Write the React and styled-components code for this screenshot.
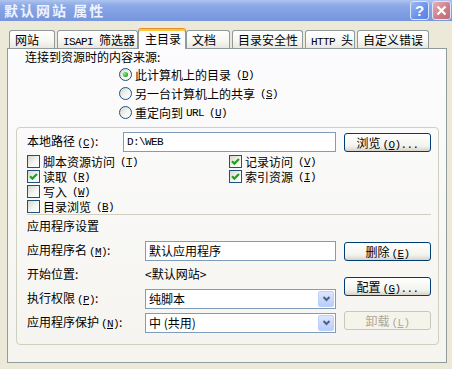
import React from 'react'
import styled, { createGlobalStyle } from 'styled-components'

const GlobalStyle = createGlobalStyle`
    html, body {
        margin: 0;
        padding: 0;
        background: #ECE9D8;
    }
    body {
        font-family: "Noto Sans CJK SC", "Noto Sans", sans-serif;
        font-size: 12px;
        color: #000;
    }
`

const Window = styled.div`
    width: 452px;
    height: 369px;
    background: #ECE9D8;
    display: flex;
    flex-direction: column;
    overflow: hidden;
`

const TitleBar = styled.div`
    height: 21px;
    flex: none;
    display: flex;
    align-items: center;
    justify-content: space-between;
    padding: 0 1px 0 4px;
    background: linear-gradient(to bottom, #AFC5F0 0%, #8DA9E7 25%, #7E9DE2 65%, #7896DD 100%);
`

const Title = styled.span`
    color: #EEF3FD;
    font-weight: bold;
    font-size: 14px;
    letter-spacing: 2px;
    line-height: 21px;
`

const CaptionButtons = styled.div`
    display: flex;
    gap: 3px;
    align-self: flex-start;
    padding-top: 1px;
`

const CapButton = styled.span`
    width: 19px;
    height: 19px;
    box-sizing: border-box;
    border: 1px solid #DCE6FA;
    border-radius: 3px;
    background: ${p => p.$close
        ? 'linear-gradient(135deg, #E9ADB3, #CB7C86 60%, #C06C77)'
        : 'linear-gradient(135deg, #9DBAF3, #6790EA 60%, #5A84E4)'};
    color: #fff;
    font: bold 15px "Liberation Sans", sans-serif;
    display: flex;
    align-items: center;
    justify-content: center;
`

const Body = styled.div`
    padding: 7px 5px 0 7px;
    display: flex;
    flex-direction: column;
`

const TabRow = styled.div`
    height: 20px;
    display: flex;
    align-items: flex-end;
    gap: 2px;
    padding-left: 2px;
`

const Tab = styled.div`
    width: ${p => p.$w}px;
    height: ${p => (p.$active ? 21 : 18)}px;
    margin: 0 ${p => (p.$active ? -2 : 0)}px ${p => (p.$active ? -1 : 0)}px;
    box-sizing: border-box;
    position: relative;
    z-index: ${p => (p.$active ? 1 : 0)};
    border: 1px solid #919B9C;
    border-bottom: none;
    border-top-color: ${p => (p.$active ? '#E68B2C' : '#919B9C')};
    border-radius: 3px 3px 0 0;
    box-shadow: ${p => (p.$active ? 'inset 0 2px 0 #FFC83C' : 'none')};
    background: ${p => (p.$active
        ? '#FCFCFE'
        : 'linear-gradient(to bottom, #FFFFFF, #F6F6F2 60%, #E8E7E0)')};
    padding: ${p => (p.$active ? '3px 0 0 6px' : '2px 0 0 5px')};
    line-height: 14px;
    white-space: nowrap;
`

const Panel = styled.div`
    height: 315px;
    box-sizing: border-box;
    border: 1px solid #919B9C;
    background: linear-gradient(to bottom, #FCFCFE, #F5F4EF);
    display: flex;
    flex-direction: column;
`

const Heading = styled.div`
    line-height: 16px;
    padding-left: 17px;
`

const RadioList = styled.div`
    display: flex;
    flex-direction: column;
    padding-left: 111px;
`

const Option = styled.div`
    height: 19px;
    display: flex;
    align-items: center;
    gap: 3px;
    line-height: 14px;
`

const Radio = styled.span`
    width: 13px;
    height: 13px;
    box-sizing: border-box;
    border-radius: 50%;
    border: 1px solid #1C5180;
    background: linear-gradient(135deg, #D6D5CE, #F4F4F0 55%, #FFFFFF);
    display: flex;
    align-items: center;
    justify-content: center;
    &::after {
        content: '';
        width: 5px;
        height: 5px;
        border-radius: 50%;
        background: ${p => (p.$on ? 'radial-gradient(circle at 35% 35%, #9BE69A, #2FAE2E 60%, #1C8F1C)' : 'transparent')};
    }
`

const GroupBox = styled.div`
    margin: 5px 7px 0 8px;
    height: 218px;
    box-sizing: border-box;
    border: 1px solid #D0D0BF;
    border-radius: 4px;
    padding: 0 7px 0 10px;
    display: flex;
    flex-direction: column;
`

const PathRow = styled.div`
    margin-top: 4px;
    height: 20px;
    display: flex;
    align-items: center;
`

const Label = styled.span`
    width: ${p => p.$w}px;
    flex: none;
    line-height: 14px;
    white-space: nowrap;
`

const Input = styled.div`
    width: ${p => p.$w}px;
    height: 20px;
    box-sizing: border-box;
    border: 1px solid #7F9DB9;
    background: #fff;
    padding-left: 3px;
    display: flex;
    align-items: center;
    line-height: 14px;
`

const Button = styled.button`
    width: 87px;
    height: 19px;
    flex: none;
    box-sizing: border-box;
    padding: 0;
    margin-left: ${p => p.$ml || 0}px;
    margin-top: ${p => p.$mt || 0}px;
    border: 1px solid ${p => (p.disabled ? '#C9C7BA' : '#003C74')};
    border-radius: 3px;
    background: ${p => (p.disabled
        ? '#F5F4EA'
        : 'linear-gradient(to bottom, #FFFFFF, #F3F3EE 70%, #D8D3C8)')};
    color: ${p => (p.disabled ? '#ACA899' : '#000')};
    font-family: inherit;
    font-size: 12px;
    line-height: 17px;
    white-space: nowrap;
`

const CheckGrid = styled.div`
    margin-top: 2px;
    display: grid;
    grid-template-columns: 202px 1fr;
    grid-template-rows: repeat(4, 15px);
    grid-auto-flow: column;
`

const CheckItem = styled.div`
    display: flex;
    align-items: center;
    gap: 3px;
    line-height: 14px;
    grid-column: ${p => p.$col};
    grid-row: ${p => p.$row};
`

const Box = styled.span`
    width: 13px;
    height: 13px;
    box-sizing: border-box;
    border: 1px solid #1C5180;
    background: linear-gradient(135deg, #D6D5CE, #F4F4F0 55%, #FFFFFF);
    display: flex;
    align-items: center;
    justify-content: center;
`

const Separator = styled.div`
    height: 1px;
    background: #D0D0BF;
`

const Lower = styled.div`
    margin-top: 4px;
    display: flex;
`

const Fields = styled.div`
    width: 309px;
    display: flex;
    flex-direction: column;
`

const Row = styled.div`
    height: ${p => p.$h}px;
    margin-top: ${p => p.$mt || 0}px;
    display: flex;
    align-items: center;
    line-height: 14px;
`

const Buttons = styled.div`
    margin-left: 8px;
    display: flex;
    flex-direction: column;
`

const Select = styled.div`
    width: 191px;
    height: 20px;
    box-sizing: border-box;
    border: 1px solid #7F9DB9;
    background: #fff;
    padding: 0 1px 0 3px;
    display: flex;
    align-items: center;
    justify-content: space-between;
`

const Arrow = styled.span`
    width: 16px;
    height: 16px;
    box-sizing: border-box;
    border: 1px solid #BCD0FA;
    border-radius: 2px;
    background: linear-gradient(to bottom, #DCE6FE, #B8CDFA);
    display: flex;
    align-items: center;
    justify-content: center;
`

const Mono = styled.span`
    font-family: "Liberation Mono", monospace;
    font-size: 11px;
    letter-spacing: -0.6px;
`

const Key = styled(Mono)`
    margin-left: 2px;
    u {
        text-underline-offset: 1px;
    }
`

const Mn = ({ k, more }) => (
    <Key>({<u>{k}</u>}){more ? '...' : ''}</Key>
)

const Check = () => (
    <svg width="9" height="9" viewBox="0 0 9 9">
        <polyline points="1,4.2 3.4,6.6 8,2" fill="none" stroke="#21A121" strokeWidth="2.2" />
    </svg>
)

const Chevron = () => (
    <svg width="9" height="6" viewBox="0 0 9 6">
        <polyline points="1.5,1 4.5,4 7.5,1" fill="none" stroke="#4D6185" strokeWidth="2" />
    </svg>
)

const tabs = [
    { w: 46, label: '网站' },
    { w: 81, label: <><Mono>ISAPI </Mono>筛选器</> },
    { w: 48, label: '主目录', active: true },
    { w: 44, label: '文档' },
    { w: 71, label: '目录安全性' },
    { w: 50, label: <><Mono>HTTP </Mono>头</> },
    { w: 72, label: '自定义错误' },
]

const App = () => (
    <Window>
        <GlobalStyle />
        <TitleBar>
            <Title>默认网站 属性</Title>
            <CaptionButtons>
                <CapButton>?</CapButton>
                <CapButton $close>
                    <svg width="11" height="11" viewBox="0 0 11 11">
                        <path d="M1.5 1.5 L9.5 9.5 M9.5 1.5 L1.5 9.5" stroke="#fff" strokeWidth="2.2" />
                    </svg>
                </CapButton>
            </CaptionButtons>
        </TitleBar>
        <Body>
            <TabRow>
                {tabs.map((t, i) => (
                    <Tab key={i} $w={t.w} $active={t.active}>{t.label}</Tab>
                ))}
            </TabRow>
            <Panel>
                <Heading>连接到资源时的内容来源:</Heading>
                <RadioList>
                    <Option><Radio $on />此计算机上的目录<Mn k="D" /></Option>
                    <Option><Radio />另一台计算机上的共享<Mn k="S" /></Option>
                    <Option><Radio />重定向到 <Mono>URL</Mono><Mn k="U" /></Option>
                </RadioList>
                <GroupBox>
                    <PathRow>
                        <Label $w={96}>本地路径<Mn k="C" />:</Label>
                        <Input $w={213}><Mono>D:\WEB</Mono></Input>
                        <Button $ml={8}>浏览<Mn k="O" more /></Button>
                    </PathRow>
                    <CheckGrid>
                        <CheckItem $col={1} $row={1}><Box />脚本资源访问<Mn k="T" /></CheckItem>
                        <CheckItem $col={1} $row={2}><Box><Check /></Box>读取<Mn k="R" /></CheckItem>
                        <CheckItem $col={1} $row={3}><Box />写入<Mn k="W" /></CheckItem>
                        <CheckItem $col={1} $row={4}><Box />目录浏览<Mn k="B" /></CheckItem>
                        <CheckItem $col={2} $row={1}><Box><Check /></Box>记录访问<Mn k="V" /></CheckItem>
                        <CheckItem $col={2} $row={2}><Box><Check /></Box>索引资源<Mn k="I" /></CheckItem>
                    </CheckGrid>
                    <Separator />
                    <Lower>
                        <Fields>
                            <Row $h={14}>应用程序设置</Row>
                            <Row $h={24} $mt={6}>
                                <Label $w={118}>应用程序名<Mn k="M" />:</Label>
                                <Input $w={191}>默认应用程序</Input>
                            </Row>
                            <Row $h={22}>
                                <Label $w={118}>开始位置:</Label>
                                <span>&lt;默认网站&gt;</span>
                            </Row>
                            <Row $h={24} $mt={2}>
                                <Label $w={118}>执行权限<Mn k="P" />:</Label>
                                <Select>纯脚本<Arrow><Chevron /></Arrow></Select>
                            </Row>
                            <Row $h={24}>
                                <Label $w={118}>应用程序保护<Mn k="N" />:</Label>
                                <Select>中 (共用)<Arrow><Chevron /></Arrow></Select>
                            </Row>
                        </Fields>
                        <Buttons>
                            <Button $mt={23}>删除<Mn k="E" /></Button>
                            <Button $mt={16}>配置<Mn k="G" more /></Button>
                            <Button $mt={15} disabled>卸载<Mn k="L" /></Button>
                        </Buttons>
                    </Lower>
                </GroupBox>
            </Panel>
        </Body>
    </Window>
)

export default App
